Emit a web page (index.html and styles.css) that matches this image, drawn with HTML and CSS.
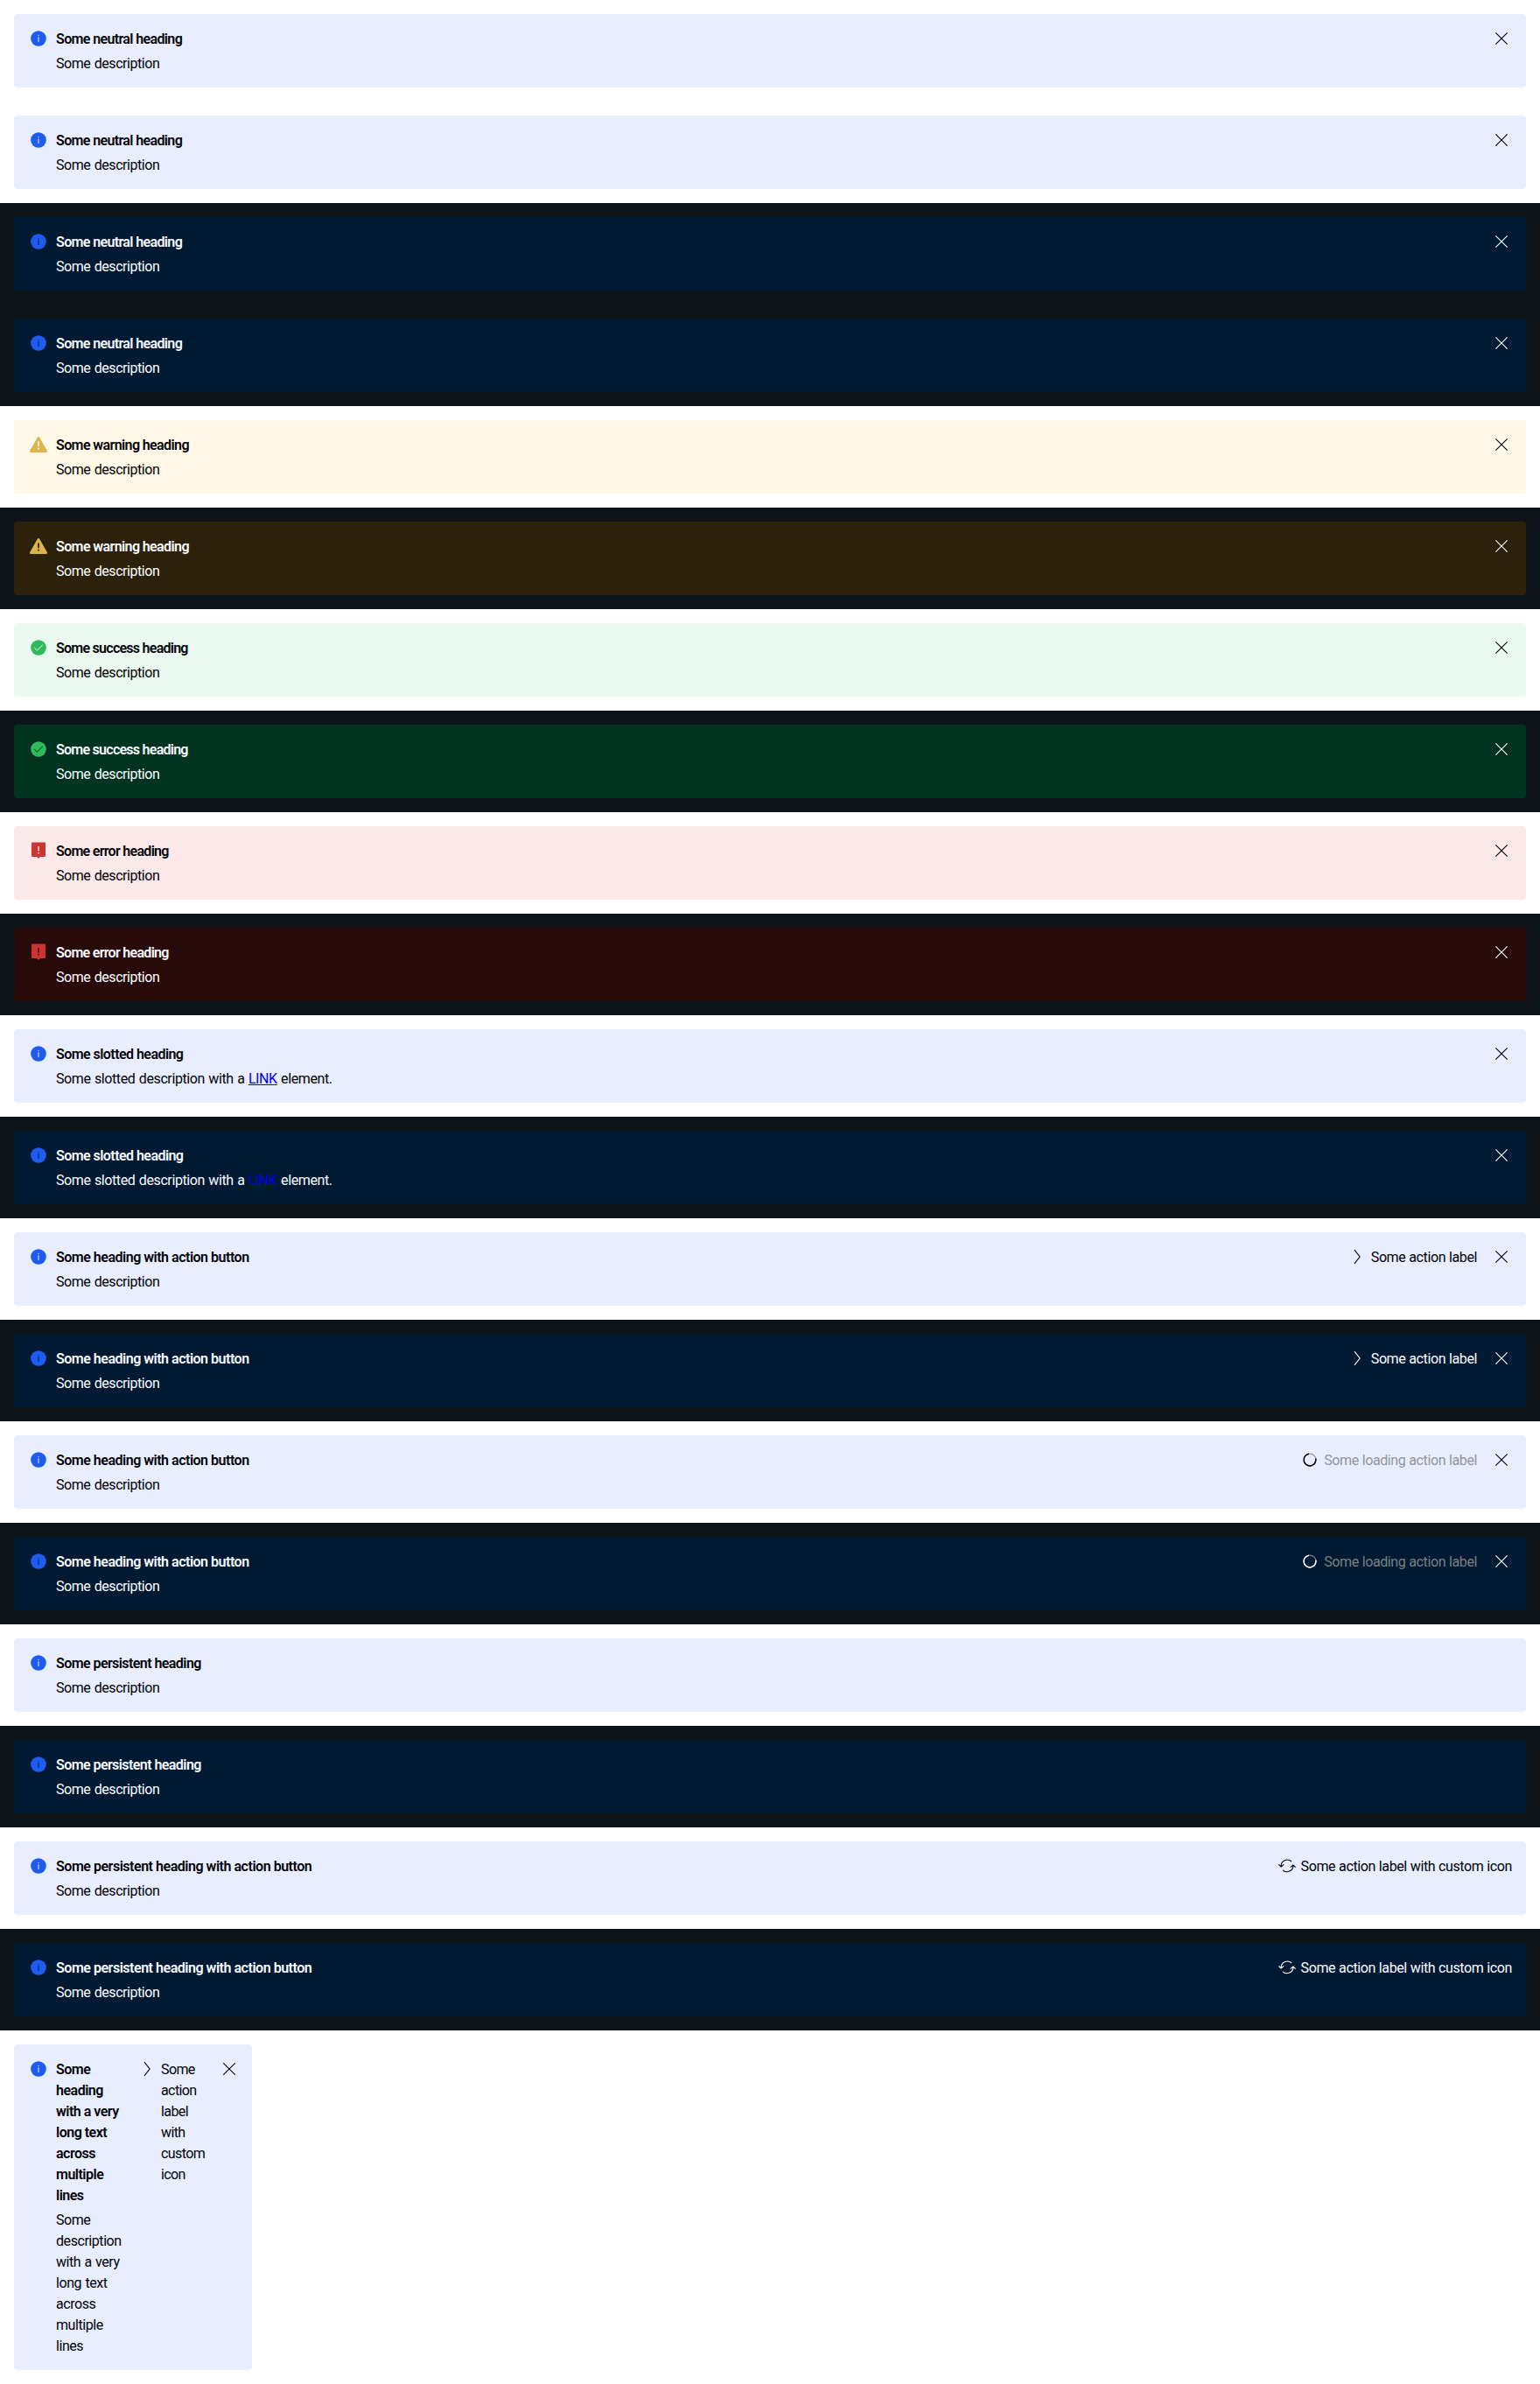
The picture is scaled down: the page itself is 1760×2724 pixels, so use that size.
FILE: index.html
```html
<!DOCTYPE html>
<html lang="en">
<head>
<meta charset="utf-8">
<title>Inline notifications</title>
<link rel="stylesheet" href="styles.css">
</head>
<body>
<svg class="sprite" aria-hidden="true">
  <symbol id="info" viewBox="0 0 24 24"><circle cx="12" cy="12" r="8.85" fill="currentColor"/><path class="mark" d="M12 10.2V16M12 8v1.1"/></symbol>
  <symbol id="warning" viewBox="0 0 24 24"><path fill="currentColor" d="M12 3c.5 0 .9.25 1.15.7l8.7 15.4c.5.9 0 1.9-1 1.9H3.15c-1 0-1.5-1-1-1.9l8.7-15.4C11.1 3.25 11.500 3 12 3Z"/><path class="mark mark-bold" d="M12 8.500v5.700M12 15.700v1.800"/></symbol>
  <symbol id="success" viewBox="0 0 24 24"><circle cx="12" cy="12" r="8.850" fill="currentColor"/><path class="mark" d="m7.300 12.100 3.200 3.100 6.300-6.500"/></symbol>
  <symbol id="error" viewBox="0 0 24 24"><path fill="currentColor" d="M5.200 2.500h13.600c.7 0 1.200.5 1.200 1.200v14.100c0 .7-.5 1.200-1.200 1.200H14l-2 2-2-2H5.200C4.500 19 4 18.500 4 17.800V3.700c0-.7.5-1.200 1.200-1.200Z"/><path class="mark mark-error" d="M12 7v5.500M12 14v1.500"/></symbol>
  <symbol id="close" viewBox="0 0 24 24"><path class="line" d="m5.300 5.300 13.400 13.400M18.700 5.300 5.300 18.700"/></symbol>
  <symbol id="chevron" viewBox="0 0 24 24"><path class="line" d="m8.900 4.200 6.200 7.800-6.200 7.800"/></symbol>
  <symbol id="refresh" viewBox="0 0 24 24"><path class="line" d="M17.100 7.200A7 7 0 0 0 5.100 12.500M2.300 10.300l2.800 2.600 3.100-2.600M7.100 16.800a7 7 0 0 0 11.800-5.300M15.800 13.700l3.100-2.600 2.800 2.600"/></symbol>
  <symbol id="spinner" viewBox="0 0 24 24"><circle class="track" cx="12" cy="12" r="6.900"/><path class="arc" d="M18.700 10.500A6.900 6.900 0 1 1 11 5.170"/></symbol>
</svg>

<section class="row light"><div class="banner info">
  <svg class="icon state"><use href="#info"/></svg>
  <div class="content"><h5 class="t-neutral">Some neutral heading</h5><p>Some description</p></div>
  <button class="close" aria-label="Close"><svg class="icon"><use href="#close"/></svg></button>
</div></section>
<section class="row light"><div class="banner info">
  <svg class="icon state"><use href="#info"/></svg>
  <div class="content"><h5 class="t-neutral">Some neutral heading</h5><p>Some description</p></div>
  <button class="close" aria-label="Close"><svg class="icon"><use href="#close"/></svg></button>
</div></section>
<section class="row dark"><div class="banner info">
  <svg class="icon state"><use href="#info"/></svg>
  <div class="content"><h5 class="t-neutral">Some neutral heading</h5><p>Some description</p></div>
  <button class="close" aria-label="Close"><svg class="icon"><use href="#close"/></svg></button>
</div></section>
<section class="row dark"><div class="banner info">
  <svg class="icon state"><use href="#info"/></svg>
  <div class="content"><h5 class="t-neutral">Some neutral heading</h5><p>Some description</p></div>
  <button class="close" aria-label="Close"><svg class="icon"><use href="#close"/></svg></button>
</div></section>

<section class="row light"><div class="banner warning">
  <svg class="icon state"><use href="#warning"/></svg>
  <div class="content"><h5 class="t-warning">Some warning heading</h5><p>Some description</p></div>
  <button class="close" aria-label="Close"><svg class="icon"><use href="#close"/></svg></button>
</div></section>
<section class="row dark"><div class="banner warning">
  <svg class="icon state"><use href="#warning"/></svg>
  <div class="content"><h5 class="t-warning">Some warning heading</h5><p>Some description</p></div>
  <button class="close" aria-label="Close"><svg class="icon"><use href="#close"/></svg></button>
</div></section>

<section class="row light"><div class="banner success">
  <svg class="icon state"><use href="#success"/></svg>
  <div class="content"><h5 class="t-success">Some success heading</h5><p>Some description</p></div>
  <button class="close" aria-label="Close"><svg class="icon"><use href="#close"/></svg></button>
</div></section>
<section class="row dark"><div class="banner success">
  <svg class="icon state"><use href="#success"/></svg>
  <div class="content"><h5 class="t-success">Some success heading</h5><p>Some description</p></div>
  <button class="close" aria-label="Close"><svg class="icon"><use href="#close"/></svg></button>
</div></section>

<section class="row light"><div class="banner error">
  <svg class="icon state"><use href="#error"/></svg>
  <div class="content"><h5 class="t-error">Some error heading</h5><p>Some description</p></div>
  <button class="close" aria-label="Close"><svg class="icon"><use href="#close"/></svg></button>
</div></section>
<section class="row dark"><div class="banner error">
  <svg class="icon state"><use href="#error"/></svg>
  <div class="content"><h5 class="t-error">Some error heading</h5><p>Some description</p></div>
  <button class="close" aria-label="Close"><svg class="icon"><use href="#close"/></svg></button>
</div></section>

<section class="row light"><div class="banner info">
  <svg class="icon state"><use href="#info"/></svg>
  <div class="content"><h5 class="t-slotted">Some slotted heading</h5><p class="t-link">Some slotted description with a <a href="#">LINK</a> element.</p></div>
  <button class="close" aria-label="Close"><svg class="icon"><use href="#close"/></svg></button>
</div></section>
<section class="row dark"><div class="banner info">
  <svg class="icon state"><use href="#info"/></svg>
  <div class="content"><h5 class="t-slotted">Some slotted heading</h5><p class="t-link">Some slotted description with a <a href="#">LINK</a> element.</p></div>
  <button class="close" aria-label="Close"><svg class="icon"><use href="#close"/></svg></button>
</div></section>

<section class="row light"><div class="banner info">
  <svg class="icon state"><use href="#info"/></svg>
  <div class="content"><h5 class="t-action">Some heading with action button</h5><p>Some description</p></div>
  <button class="action"><svg class="icon"><use href="#chevron"/></svg><span>Some action label</span></button>
  <button class="close" aria-label="Close"><svg class="icon"><use href="#close"/></svg></button>
</div></section>
<section class="row dark"><div class="banner info">
  <svg class="icon state"><use href="#info"/></svg>
  <div class="content"><h5 class="t-action">Some heading with action button</h5><p>Some description</p></div>
  <button class="action"><svg class="icon"><use href="#chevron"/></svg><span>Some action label</span></button>
  <button class="close" aria-label="Close"><svg class="icon"><use href="#close"/></svg></button>
</div></section>

<section class="row light"><div class="banner info">
  <svg class="icon state"><use href="#info"/></svg>
  <div class="content"><h5 class="t-action">Some heading with action button</h5><p>Some description</p></div>
  <button class="action loading"><svg class="icon"><use href="#spinner"/></svg><span>Some loading action label</span></button>
  <button class="close" aria-label="Close"><svg class="icon"><use href="#close"/></svg></button>
</div></section>
<section class="row dark"><div class="banner info">
  <svg class="icon state"><use href="#info"/></svg>
  <div class="content"><h5 class="t-action">Some heading with action button</h5><p>Some description</p></div>
  <button class="action loading"><svg class="icon"><use href="#spinner"/></svg><span>Some loading action label</span></button>
  <button class="close" aria-label="Close"><svg class="icon"><use href="#close"/></svg></button>
</div></section>

<section class="row light"><div class="banner info">
  <svg class="icon state"><use href="#info"/></svg>
  <div class="content"><h5 class="t-persistent">Some persistent heading</h5><p>Some description</p></div>
</div></section>
<section class="row dark"><div class="banner info">
  <svg class="icon state"><use href="#info"/></svg>
  <div class="content"><h5 class="t-persistent">Some persistent heading</h5><p>Some description</p></div>
</div></section>

<section class="row light"><div class="banner info">
  <svg class="icon state"><use href="#info"/></svg>
  <div class="content"><h5 class="t-persistent-action">Some persistent heading with action button</h5><p>Some description</p></div>
  <button class="action custom"><svg class="icon"><use href="#refresh"/></svg><span>Some action label with custom icon</span></button>
</div></section>
<section class="row dark"><div class="banner info">
  <svg class="icon state"><use href="#info"/></svg>
  <div class="content"><h5 class="t-persistent-action">Some persistent heading with action button</h5><p>Some description</p></div>
  <button class="action custom"><svg class="icon"><use href="#refresh"/></svg><span>Some action label with custom icon</span></button>
</div></section>

<section class="row light"><div class="banner info narrow">
  <svg class="icon state"><use href="#info"/></svg>
  <div class="content"><h5>Some heading with a very long text across multiple lines</h5><p>Some description with a very long text across multiple lines</p></div>
  <button class="action"><svg class="icon"><use href="#chevron"/></svg><span>Some action label with custom icon</span></button>
  <button class="close" aria-label="Close"><svg class="icon"><use href="#close"/></svg></button>
</div></section>
</body>
</html>
```
FILE: styles.css
```css
body {
  margin: 0;
  background: #fff;
  font: 400 16px/24px Roboto, "Liberation Sans", sans-serif;
}

.sprite { position: absolute; width: 0; height: 0; }

.row { padding: 16px; }

.light {
  --text: #010205;
  --disabled: #949598;
  --info-soft: #e8eeff;
  --warning-soft: #fff8e6;
  --success-soft: #e9f9ef;
  --error-soft: #fce8e8;
  background: #fff;
}

.dark {
  --text: #fbfcff;
  --disabled: #7c7f81;
  --info-soft: #001a33;
  --warning-soft: #2c210a;
  --success-soft: #003320;
  --error-soft: #280a0b;
  background: #0e1418;
}

.banner {
  display: flex;
  align-items: flex-start;
  gap: 16px;
  padding: 16px;
  border-radius: 4px;
  background: var(--soft);
  color: var(--text);
}

.info { --soft: var(--info-soft); --state: #1e5cf1; }
.warning { --soft: var(--warning-soft); --state: #deb34a; }
.success { --soft: var(--success-soft); --state: #30ba5b; }
.error { --soft: var(--error-soft); --state: #cc3333; }

.icon { display: block; flex: none; width: 24px; height: 24px; }
.state { margin-right: -8px; color: var(--state); }
.mark { fill: none; stroke: var(--soft); stroke-width: 1; }
.mark-bold { stroke-width: 1.8; }
.mark-error { stroke-width: 1.5; }
.line { fill: none; stroke: currentColor; stroke-width: 1.1; }
.track { fill: none; stroke: var(--disabled); stroke-width: 1.3; }
.arc { fill: none; stroke: var(--text); stroke-width: 1.5; }

/* text sits one pixel below the centre of its line, next to the icons */
.content { flex: 1; padding-top: 1px; margin-bottom: -1px; }
.action span { padding-top: 1px; margin-bottom: -1px; }

h5, p { margin: 0; font-size: 16px; }
h5 { font-weight: 600; letter-spacing: -0.5px; }
p { margin-top: 4px; letter-spacing: -0.44px; word-spacing: 0.8px; }

.t-neutral { letter-spacing: -0.63px; }
.t-warning { letter-spacing: -0.6px; }
.t-success { letter-spacing: -0.74px; }
.t-error { letter-spacing: -0.7px; }
.t-slotted { letter-spacing: -0.55px; }
.t-action { letter-spacing: -0.49px; }
.t-persistent { letter-spacing: -0.57px; }
.t-persistent-action { letter-spacing: -0.47px; }
.t-link { letter-spacing: -0.4px; word-spacing: 0.85px; }

a { color: #00e; }

button {
  margin: 0;
  padding: 0;
  border: 0;
  background: none;
  color: inherit;
  font: inherit;
  text-align: left;
}

.close { flex: none; }

.action {
  display: flex;
  flex: none;
  gap: 4px;
  letter-spacing: -0.4px;
  word-spacing: 0.4px;
}

.loading span { color: var(--disabled); }

.narrow { box-sizing: border-box; width: 272px; }
.narrow .content { flex: none; width: 76px; }
.narrow .action { letter-spacing: -0.6px; }
.narrow .action span { width: 50px; }
```
